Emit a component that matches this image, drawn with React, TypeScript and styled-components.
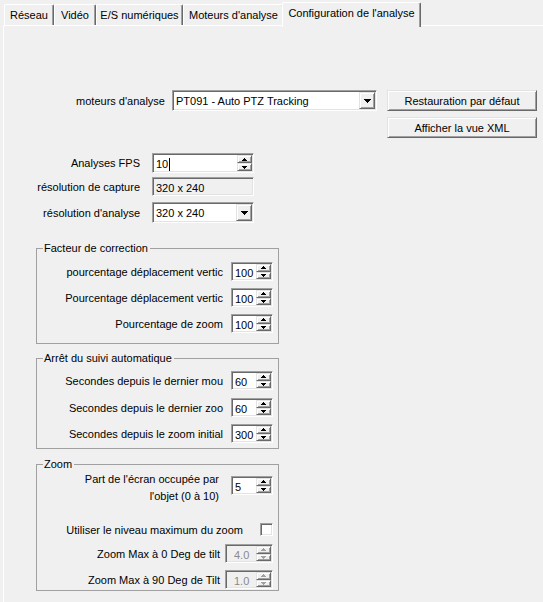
import React from "react";
import styled, { createGlobalStyle } from "styled-components";

const Global = createGlobalStyle`
  html, body { margin: 0; padding: 0; background: #f0f0f0; overflow: hidden; }
  body { font-family: "Liberation Sans", Arial, sans-serif; font-size: 11px; color: #000; }
  * { box-sizing: border-box; }
`;

const Window = styled.div`
  width: 543px;
  height: 602px;
  overflow: hidden;
  background: #f0f0f0;
`;

const TabBar = styled.div`
  display: flex;
  align-items: flex-end;
  height: 25px;
  padding-left: 4px;
  position: relative;
  z-index: 2;
`;

const Tab = styled.div<{ $w: number; $active?: boolean }>`
  width: ${(p) => p.$w}px;
  height: ${(p) => (p.$active ? 25 : 21)}px;
  margin-bottom: ${(p) => (p.$active ? -2 : 0)}px;
  margin-left: ${(p) => (p.$active ? -2 : 0)}px;
  padding-bottom: ${(p) => (p.$active ? 4 : 1)}px;
  background: #f0f0f0;
  border-top: 1px solid #fff;
  border-left: 1px solid #fff;
  border-right: 1px solid #696969;
  box-shadow: inset -1px 0 0 #a0a0a0;
  border-top-left-radius: 2px;
  border-top-right-radius: 2px;
  display: flex;
  align-items: center;
  justify-content: center;
  white-space: nowrap;
  position: relative;
  z-index: ${(p) => (p.$active ? 2 : 1)};
`;

const Panel = styled.div`
  position: relative;
  z-index: 1;
  margin-left: 3px;
  width: 620px;
  height: 620px;
  border-top: 1px solid #fff;
  border-left: 1px solid #fff;
  padding-top: 64px;
`;

const TopRow = styled.div`
  display: flex;
  align-items: flex-start;
`;

const RightLabel = styled.div<{ $w: number; $h: number }>`
  width: ${(p) => p.$w}px;
  height: ${(p) => p.$h}px;
  display: flex;
  align-items: center;
  justify-content: flex-end;
  white-space: nowrap;
  flex-shrink: 0;
`;

const sunken = `
  border: 1px solid;
  border-color: #a0a0a0 #fff #fff #a0a0a0;
  box-shadow: inset 1px 1px 0 #696969, inset -1px -1px 0 #e3e3e3;
`;

const raised = `
  background: #f0f0f0;
  border: 1px solid;
  border-color: #e3e3e3 #696969 #696969 #e3e3e3;
  box-shadow: inset 1px 1px 0 #fff, inset -1px -1px 0 #a0a0a0;
`;

const SelectBox = styled.div<{ $w: number; $h: number; $ml: number }>`
  ${sunken}
  width: ${(p) => p.$w}px;
  height: ${(p) => p.$h}px;
  margin-left: ${(p) => p.$ml}px;
  background: #fff;
  padding: 1px;
  display: flex;
  align-items: stretch;
  flex-shrink: 0;
`;

const SelectText = styled.div`
  flex: 1;
  display: flex;
  align-items: center;
  padding-left: 2px;
  padding-top: 1px;
  white-space: nowrap;
`;

const DropButton = styled.div`
  ${raised}
  width: 16px;
  display: flex;
  align-items: center;
  justify-content: center;
`;

const ButtonColumn = styled.div`
  display: flex;
  flex-direction: column;
  gap: 6px;
  margin-left: 10px;
`;

const PushButton = styled.div`
  ${raised}
  width: 150px;
  height: 21px;
  display: flex;
  align-items: center;
  justify-content: center;
  white-space: nowrap;
`;

const FormBlock = styled.div`
  margin-top: 15px;
  display: flex;
  flex-direction: column;
`;

const FormRow = styled.div<{ $mt?: number }>`
  display: flex;
  align-items: center;
  gap: 12px;
  margin-top: ${(p) => p.$mt ?? 0}px;
`;

const SpinBox = styled.div<{ $w: number; $h: number; $disabled?: boolean }>`
  ${sunken}
  width: ${(p) => p.$w}px;
  height: ${(p) => p.$h}px;
  background: ${(p) => (p.$disabled ? "#f0f0f0" : "#fff")};
  color: ${(p) => (p.$disabled ? "#8a8a8a" : "#000")};
  display: flex;
  align-items: stretch;
  padding: 1px;
  flex-shrink: 0;
`;

const SpinText = styled.div<{ $pl?: number }>`
  flex: 1;
  display: flex;
  align-items: center;
  padding-left: ${(p) => p.$pl ?? 2}px;
  padding-top: 2px;
  white-space: nowrap;
`;

const Caret = styled.span`
  display: inline-block;
  width: 1px;
  height: 13px;
  background: #000;
  margin-left: 1px;
`;

const SpinButtons = styled.div`
  width: 15px;
  display: flex;
  flex-direction: column;
`;

const SpinButton = styled.div`
  ${raised}
  flex: 1;
  display: flex;
  align-items: center;
  justify-content: center;
`;

const ReadOnlyBox = styled.div<{ $w: number; $h: number }>`
  ${sunken}
  width: ${(p) => p.$w}px;
  height: ${(p) => p.$h}px;
  background: #f0f0f0;
  display: flex;
  align-items: center;
  padding: 2px 0 0 3px;
`;

const Group = styled.div<{ $mt: number; $pt: number; $pb: number }>`
  position: relative;
  margin-left: 32px;
  margin-top: ${(p) => p.$mt}px;
  width: 243px;
  border: 1px solid #a0a0a0;
  padding: ${(p) => p.$pt}px 5px ${(p) => p.$pb}px 6px;
  display: flex;
  flex-direction: column;
`;

const Legend = styled.span`
  position: absolute;
  top: -7px;
  left: 6px;
  padding: 0 2px 0 1px;
  line-height: 13px;
  background: #f0f0f0;
  white-space: nowrap;
`;

const GroupRow = styled.div<{ $gap: number; $mt?: number; $top?: boolean }>`
  display: flex;
  justify-content: flex-end;
  align-items: ${(p) => (p.$top ? "flex-start" : "center")};
  gap: ${(p) => p.$gap}px;
  margin-top: ${(p) => p.$mt ?? 0}px;
  min-height: 19px;
`;

const GroupLabel = styled.div`
  white-space: nowrap;
  text-align: right;
`;

const MultiLabel = styled.div`
  text-align: right;
  line-height: 17px;
  white-space: nowrap;
`;

const SpinSlot = styled.div<{ $mt: number }>`
  margin-top: ${(p) => p.$mt}px;
`;

const CheckBox = styled.div`
  ${sunken}
  width: 13px;
  height: 13px;
  background: #fff;
`;

const Arrow = ({ dir, color = "#000" }: { dir: "up" | "down"; color?: string }) => {
  const rows = dir === "up" ? [[2, 1], [1, 3], [0, 5]] : [[0, 5], [1, 3], [2, 1]];
  return (
    <svg width="5" height="3" viewBox="0 0 5 3" shapeRendering="crispEdges">
      {rows.map(([x, w], i) => (
        <rect key={i} x={x} y={i} width={w} height={1} fill={color} />
      ))}
    </svg>
  );
};

const DownTriangle = () => (
  <svg width="7" height="4" viewBox="0 0 7 4" shapeRendering="crispEdges">
    {[[0, 7], [1, 5], [2, 3], [3, 1]].map(([x, w], i) => (
      <rect key={i} x={x} y={i} width={w} height={1} fill="#000" />
    ))}
  </svg>
);

const Spin = ({
  value,
  w = 42,
  h = 19,
  disabled,
  caret,
  pl,
}: {
  value: string;
  w?: number;
  h?: number;
  disabled?: boolean;
  caret?: boolean;
  pl?: number;
}) => (
  <SpinBox $w={w} $h={h} $disabled={disabled}>
    <SpinText $pl={pl}>
      {value}
      {caret && <Caret />}
    </SpinText>
    <SpinButtons>
      <SpinButton>
        <Arrow dir="up" color={disabled ? "#a0a0a0" : "#000"} />
      </SpinButton>
      <SpinButton>
        <Arrow dir="down" color={disabled ? "#a0a0a0" : "#000"} />
      </SpinButton>
    </SpinButtons>
  </SpinBox>
);

const Select = ({ value, w, h, ml }: { value: string; w: number; h: number; ml: number }) => (
  <SelectBox $w={w} $h={h} $ml={ml}>
    <SelectText>{value}</SelectText>
    <DropButton>
      <DownTriangle />
    </DropButton>
  </SelectBox>
);

export default function App() {
  return (
    <>
      <Global />
      <Window>
        <TabBar>
          <Tab $w={50}>Réseau</Tab>
          <Tab $w={42}>Vidéo</Tab>
          <Tab $w={87}>E/S numériques</Tab>
          <Tab $w={101}>Moteurs d'analyse</Tab>
          <Tab $w={139} $active>
            Configuration de l'analyse
          </Tab>
        </TabBar>
        <Panel>
          <TopRow>
            <RightLabel $w={161} $h={21}>
              moteurs d'analyse
            </RightLabel>
            <Select value="PT091 - Auto PTZ Tracking" w={205} h={21} ml={7} />
            <ButtonColumn>
              <PushButton>Restauration par défaut</PushButton>
              <PushButton>Afficher la vue XML</PushButton>
            </ButtonColumn>
          </TopRow>

          <FormBlock>
            <FormRow>
              <RightLabel $w={136} $h={20}>
                Analyses FPS
              </RightLabel>
              <Spin value="10" w={102} h={20} caret />
            </FormRow>
            <FormRow $mt={4}>
              <RightLabel $w={136} $h={19}>
                résolution de capture
              </RightLabel>
              <ReadOnlyBox $w={102} $h={19}>
                320 x 240
              </ReadOnlyBox>
            </FormRow>
            <FormRow $mt={6}>
              <RightLabel $w={136} $h={21}>
                résolution d'analyse
              </RightLabel>
              <Select value="320 x 240" w={102} h={21} ml={0} />
            </FormRow>
          </FormBlock>

          <Group $mt={25} $pt={13} $pb={10}>
            <Legend>Facteur de correction</Legend>
            <GroupRow $gap={8}>
              <GroupLabel>pourcentage déplacement vertic</GroupLabel>
              <Spin value="100" />
            </GroupRow>
            <GroupRow $gap={8} $mt={7}>
              <GroupLabel>Pourcentage déplacement vertic</GroupLabel>
              <Spin value="100" />
            </GroupRow>
            <GroupRow $gap={8} $mt={7}>
              <GroupLabel>Pourcentage de zoom</GroupLabel>
              <Spin value="100" />
            </GroupRow>
          </Group>

          <Group $mt={14} $pt={12} $pb={5}>
            <Legend>Arrêt du suivi automatique</Legend>
            <GroupRow $gap={8}>
              <GroupLabel>Secondes depuis le dernier mou</GroupLabel>
              <Spin value="60" />
            </GroupRow>
            <GroupRow $gap={8} $mt={8}>
              <GroupLabel>Secondes depuis le dernier zoo</GroupLabel>
              <Spin value="60" />
            </GroupRow>
            <GroupRow $gap={8} $mt={7}>
              <GroupLabel>Secondes depuis le zoom initial</GroupLabel>
              <Spin value="300" />
            </GroupRow>
          </Group>

          <Group $mt={15} $pt={6} $pb={1}>
            <Legend>Zoom</Legend>
            <GroupRow $gap={12} $top>
              <MultiLabel>
                Part de l'écran occupée par
                <br />
                l'objet (0 à 10)
              </MultiLabel>
              <SpinSlot $mt={5}>
                <Spin value="5" />
              </SpinSlot>
            </GroupRow>
            <GroupRow $gap={17} $mt={15}>
              <GroupLabel>Utiliser le niveau maximum du zoom</GroupLabel>
              <CheckBox />
            </GroupRow>
            <GroupRow $gap={5} $mt={5}>
              <GroupLabel>Zoom Max à 0 Deg de tilt</GroupLabel>
              <Spin value="4.0" w={48} disabled pl={7} />
            </GroupRow>
            <GroupRow $gap={5} $mt={7}>
              <GroupLabel>Zoom Max à 90 Deg de Tilt</GroupLabel>
              <Spin value="1.0" w={48} disabled pl={7} />
            </GroupRow>
          </Group>
        </Panel>
      </Window>
    </>
  );
}
